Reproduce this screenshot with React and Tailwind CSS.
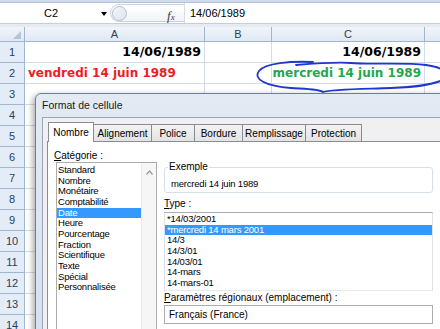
import React from "react";

const rowNums = [1, 2, 3, 4, 5, 6, 7, 8, 9, 10, 11, 12, 13, 14];

const categories = [
  "Standard",
  "Nombre",
  "Monétaire",
  "Comptabilité",
  "Date",
  "Heure",
  "Pourcentage",
  "Fraction",
  "Scientifique",
  "Texte",
  "Spécial",
  "Personnalisée",
];

const types = [
  "*14/03/2001",
  "*mercredi 14 mars 2001",
  "14/3",
  "14/3/01",
  "14/03/01",
  "14-mars",
  "14-mars-01",
];

const tabs = [
  { label: "Nombre", w: "w-[46px]", active: true },
  { label: "Alignement", w: "w-[58px]" },
  { label: "Police", w: "w-[43px]" },
  { label: "Bordure", w: "w-[48px]" },
  { label: "Remplissage", w: "w-[63px]" },
  { label: "Protection", w: "w-[56px]" },
];

function Row({ n, a, c }) {
  return (
    <div className="flex h-[21px]">
      <div className="w-[25px] shrink-0 bg-[#e4ecf7] border-r border-b border-[#9eb6ce] flex items-center justify-center text-[11px] text-[#27415f]">
        {n}
      </div>
      <div className="w-[180px] shrink-0 border-r border-b border-[#d4dbe6] flex items-center">
        {a}
      </div>
      <div className="w-[67px] shrink-0 border-r border-b border-[#d4dbe6]" />
      <div className="w-[153px] shrink-0 border-r border-b border-[#d4dbe6] flex items-center justify-end">
        {c}
      </div>
      <div className="flex-1 border-b border-[#d4dbe6]" />
    </div>
  );
}

export default function App() {
  const cellFont = "font-['DejaVu_Sans',Tahoma,sans-serif] font-bold";
  const listText = "text-[9.5px] tracking-[-0.2px]";
  return (
    <div className="relative w-[440px] h-[329px] overflow-hidden bg-white font-['Liberation_Sans',Arial,sans-serif]">
      {/* bord du ruban */}
      <div className="h-[3px] bg-[#cfdbea] border-b border-[#b3c2d6]" />

      {/* barre de formule */}
      <div className="flex h-[21px] bg-white border-b border-[#c3cedb]">
        <div className="relative w-[110px] flex items-center">
          <span className="ml-[44px] text-[11px] text-black">C2</span>
          <span className="absolute left-[101px] top-[9px] border-x-[3px] border-t-[4px] border-x-transparent border-t-black" />
        </div>
        <div className="relative w-[74px] my-[1px] rounded-l-full border border-r-0 border-[#c9d2dd] bg-gradient-to-b from-white to-[#f1f4f8]">
          <div className="absolute left-[1px] top-[1px] w-[15px] h-[15px] rounded-full border border-[#b4bfcc] bg-gradient-to-br from-[#f4f6f9] to-[#dfe5ec]" />
          <span className="absolute left-[56px] top-[1px] italic font-['Liberation_Serif',serif] text-[13px] text-[#3a3a3a]">
            f<span className="text-[9px]">x</span>
          </span>
        </div>
        <div className="flex-1 border-l border-[#d5dce5] flex items-center pl-[5px] text-[11px] text-black">
          14/06/1989
        </div>
      </div>
      <div className="h-[3px] bg-[#e6ebf2]" />

      {/* en-têtes de colonnes */}
      <div className="flex h-[15px] bg-gradient-to-b from-[#f1f5fa] to-[#e0e8f2] border-b border-[#9eb6ce] text-[11px] text-[#27415f]">
        <div className="relative w-[25px] border-r border-[#9eb6ce]">
          <svg className="absolute right-[3px] bottom-[2px]" width="8" height="8" viewBox="0 0 8 8">
            <polygon points="8,0 8,8 0,8" fill="#b5c4d6" />
          </svg>
        </div>
        <div className="w-[180px] border-r border-[#9eb6ce] flex items-center justify-center">A</div>
        <div className="w-[67px] border-r border-[#9eb6ce] flex items-center justify-center">B</div>
        <div className="w-[153px] border-r border-[#9eb6ce] flex items-center justify-center">C</div>
        <div className="flex-1" />
      </div>

      {/* lignes */}
      {rowNums.map((n) => (
        <Row
          key={n}
          n={n}
          a={
            n === 1 ? (
              <span className={`ml-auto pr-[3px] text-[12.5px] text-black ${cellFont}`}>14/06/1989</span>
            ) : n === 2 ? (
              <span className={`pl-[3px] text-[12px] text-[#ee1c24] ${cellFont}`}>vendredi 14 juin 1989</span>
            ) : null
          }
          c={
            n === 1 ? (
              <span className={`pr-[3px] text-[12.5px] text-black ${cellFont}`}>14/06/1989</span>
            ) : n === 2 ? (
              <span className={`pr-[3px] text-[12px] text-[#1fa84f] ${cellFont}`}>mercredi 14 juin 1989</span>
            ) : null
          }
        />
      ))}

      {/* entourage à la main */}
      <svg className="absolute left-[251px] top-[58px]" width="200" height="40" viewBox="0 0 200 40">
        <path
          d="M62 4 C40 3 14 5 8 13 C2 21 14 28 40 30 C55 31 68 31 72 34 C80 31 110 31 140 30 C165 29 185 27 195 20 C198 14 190 9 175 7 C150 4 120 7 100 5 C85 4 70 5 45 7"
          fill="none"
          stroke="#2036d0"
          strokeWidth="1.8"
          strokeLinecap="round"
        />
      </svg>

      {/* boîte de dialogue */}
      <div className="absolute left-[35px] top-[93px] w-[420px] h-[250px] rounded-tl-[6px] border border-[#6d7f93] bg-gradient-to-b from-[#e3eaf3] to-[#d6e1ee] shadow-[-2px_2px_6px_rgba(0,0,0,0.35)] text-[10px] text-black">
        <div className="h-[23px] flex items-center pl-[6px] text-[10.5px] text-[#1a1a1a]">Format de cellule</div>
        <div className="ml-[6px] h-[230px] bg-[#f0f0f0] border-l border-t border-[#97a5b6] pl-[4px] pt-[4px]">
          {/* onglets */}
          <div className="flex items-end h-[19px] pl-[1px]">
            {tabs.map((t) =>
              t.active ? (
                <div
                  key={t.label}
                  className={`${t.w} relative z-10 h-[20px] -mb-px bg-white border-x border-t border-[#898c95] flex items-center justify-center`}
                >
                  {t.label}
                </div>
              ) : (
                <div
                  key={t.label}
                  className={`${t.w} h-[17px] border-r border-t border-[#898c95] bg-gradient-to-b from-[#f3f3f3] to-[#e3e3e3] flex items-center justify-center`}
                >
                  {t.label}
                </div>
              )
            )}
          </div>

          {/* panneau */}
          <div className="flex h-[210px] bg-white border border-[#898c95] pl-[6px] pt-[8px]">
            <div className="w-[103px] shrink-0">
              <div className="leading-[12px]">
                <span className="underline">C</span>atégorie :
              </div>
              <div className="ml-[2px] flex h-[180px] border border-[#abadb3]">
                <div className={`flex-1 pt-[2px] ${listText}`}>
                  {categories.map((c) => (
                    <div
                      key={c}
                      className={`h-[10.67px] leading-[10.67px] pl-[1px] ${c === "Date" ? "bg-[#3399ff] text-white" : ""}`}
                    >
                      {c}
                    </div>
                  ))}
                </div>
                <div className="relative w-[15px] bg-[#f6f6f6] border-l border-[#ececec]">
                  <svg className="absolute left-[4px] top-[7px]" width="7" height="5" viewBox="0 0 7 5">
                    <path d="M0.5 4.5 L3.5 1 L6.5 4.5" fill="none" stroke="#9a9a9a" strokeWidth="1.2" />
                  </svg>
                </div>
              </div>
            </div>

            <div className="ml-[7px] w-[269px] shrink-0">
              <div className="relative mt-[17px] h-[26px] border border-[#d5dfe5] rounded-[3px] pl-[6px] pt-[10px] leading-[12px]">
                <span className="absolute -top-[7px] left-[3px] bg-white px-[1px] leading-[12px]">Exemple</span>
                <span className={listText}>mercredi 14 juin 1989</span>
              </div>
              <div className="mt-[5px] leading-[12px]">
                <span className="underline">T</span>ype :
              </div>
              <div className={`mt-[2px] h-[79px] border border-[#abadb3] border-b-[#e3e9ef] border-x-[#dbdfe6] pt-[1px] ${listText}`}>
                {types.map((t) => (
                  <div
                    key={t}
                    className={`h-[10.67px] leading-[10.67px] pl-[2px] ${t.startsWith("*m") ? "bg-[#3399ff] text-white" : ""}`}
                  >
                    {t}
                  </div>
                ))}
              </div>
              <div className="mt-px leading-[12px]">
                <span className="underline">P</span>aramètres régionaux (emplacement) :
              </div>
              <div className="mt-px h-[19px] border border-[#abadb3] flex items-center pl-[4px]">Français (France)</div>
            </div>
          </div>
        </div>
      </div>
    </div>
  );
}
